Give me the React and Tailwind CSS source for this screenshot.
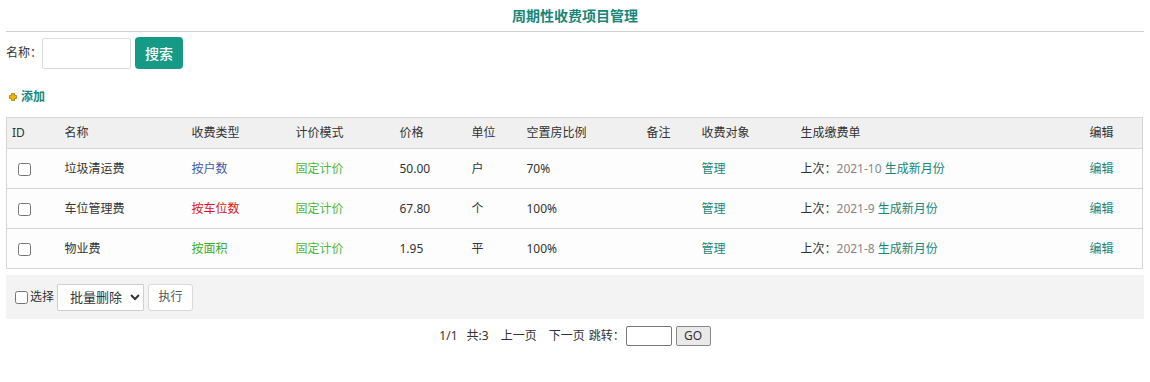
import React from "react";

const rows = [
  { name: "垃圾清运费", type: "按户数", typeCls: "text-[#3a5bb0]", price: "50.00", unit: "户", ratio: "70%", last: "2021-10" },
  { name: "车位管理费", type: "按车位数", typeCls: "text-[#e0101e]", price: "67.80", unit: "个", ratio: "100%", last: "2021-9" },
  { name: "物业费", type: "按面积", typeCls: "text-[#3aac2a]", price: "1.95", unit: "平", ratio: "100%", last: "2021-8" },
];

const widths = ["w-[53px]", "w-[127px]", "w-[104px]", "w-[104px]", "w-[72px]", "w-[55px]", "w-[120px]", "w-[55px]", "w-[99px]", "w-[289px]", "w-[58px]"];
const heads = ["ID", "名称", "收费类型", "计价模式", "价格", "单位", "空置房比例", "备注", "收费对象", "生成缴费单", "编辑"];

export default function App() {
  return (
    <div className="w-[1150px] h-[382px] bg-white text-[#333] text-[12px]" style={{ fontFamily: '"Noto Sans", "Noto Sans CJK SC", sans-serif' }}>
      <div className="px-[6px]">
        <div className="h-[32px] flex items-center justify-center border-b border-[#cfcfcf]">
          <span className="text-[14px] font-bold text-[#17867a] leading-none">周期性收费项目管理</span>
        </div>
        <div className="flex items-center h-[32px] mt-[5px]">
          <span className="text-[12px]">名称：</span>
          <input className="w-[89px] h-[31px] border border-[#dcdcdc] rounded-[2px] outline-none" />
          <button className="ml-[4px] w-[48px] h-[32px] bg-[#159a86] text-white text-[14px] rounded-[4px] font-medium">搜索</button>
        </div>
        <div className="flex items-center h-[20px] mt-[18px] pl-[3px]">
          <svg width="8" height="8" viewBox="0 0 8 8" className="mr-[4px]">
            <path d="M2.5 0.5h3v2h2v3h-2v2h-3v-2h-2v-3h2z" fill="#f0b400" stroke="#b07800" strokeWidth="0.8" />
          </svg>
          <span className="text-[#17867a] font-bold text-[12px]">添加</span>
        </div>
        <table className="mt-[10px] w-[1136px] border-collapse border border-[#d6d6d6] table-fixed">
          <thead>
            <tr className="h-[31px] bg-[#f0f0f0]">
              {heads.map((h, i) => (
                <th key={h} className={`${widths[i]} text-left font-normal pl-[5px] border-b border-[#d6d6d6]`}>{h}</th>
              ))}
            </tr>
          </thead>
          <tbody>
            {rows.map((r) => (
              <tr key={r.name} className="h-[40px] bg-[#fdfdfd] border-b border-[#d6d6d6]">
                <td className="pl-[11px]"><input type="checkbox" className="w-[13px] h-[13px] align-middle m-0" /></td>
                <td className="pl-[5px]">{r.name}</td>
                <td className={`pl-[5px] ${r.typeCls}`}>{r.type}</td>
                <td className="pl-[5px] text-[#4cb83a]">固定计价</td>
                <td className="pl-[5px]">{r.price}</td>
                <td className="pl-[5px]">{r.unit}</td>
                <td className="pl-[5px]">{r.ratio}</td>
                <td className="pl-[5px]"></td>
                <td className="pl-[5px] text-[#17867a]">管理</td>
                <td className="pl-[5px]">
                  上次：<span className="text-[#888]">{r.last}</span> <span className="text-[#17867a]">生成新月份</span>
                </td>
                <td className="pl-[5px] text-[#17867a]">编辑</td>
              </tr>
            ))}
          </tbody>
        </table>
        <div className="mt-[6px] h-[44px] bg-[#f3f3f3] flex items-center pl-[9px]">
          <label className="flex items-center">
            <input type="checkbox" className="w-[13px] h-[13px] m-0 mr-[2px]" />
            <span className="text-[12px]">选择</span>
          </label>
          <select className="ml-[3px] w-[87px] h-[27px] border border-[#cfcfcf] bg-white text-[13px] pl-[8px] rounded-[1px]">
            <option>批量删除</option>
          </select>
          <button className="ml-[4px] w-[45px] h-[27px] border border-[#d9d9d9] bg-white rounded-[3px] text-[12px] text-[#555]">执行</button>
        </div>
        <div className="flex items-center justify-center h-[31px] mt-[1px] text-[12px]">
          <span>1/1</span>
          <span className="ml-[9px]">共:3</span>
          <span className="ml-[12px]">上一页</span>
          <span className="ml-[12px]">下一页</span>
          <span className="ml-[4px]">跳转：</span>
          <input className="ml-[1px] w-[46px] h-[20px] border border-[#777] rounded-[2px] outline-none" />
          <button className="ml-[4px] w-[35px] h-[20px] border border-[#888] bg-[#e9e9e9] rounded-[2px] text-[12px] leading-none">GO</button>
        </div>
      </div>
    </div>
  );
}
